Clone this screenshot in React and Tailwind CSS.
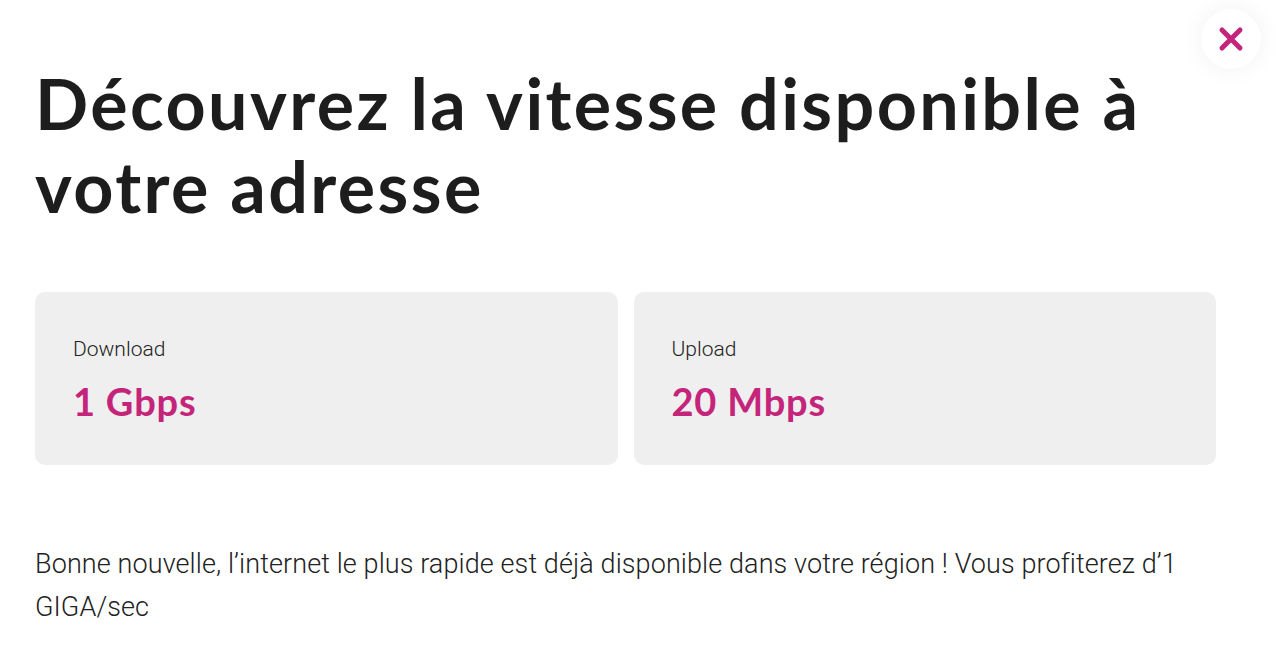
export default function App() {
  return (
    <div className="relative min-h-[654px] w-full bg-white">
      {/* close button */}
      <button className="absolute left-[1201px] top-[9px] flex h-[60px] w-[60px] items-center justify-center rounded-full bg-white shadow-[0_0_24px_rgba(0,0,0,0.06)]">
        <svg width="26" height="26" viewBox="0 0 26 26" fill="none">
          <path d="M4 4L22 22M22 4L4 22" stroke="#c4247a" strokeWidth="5" strokeLinecap="round" />
        </svg>
      </button>

      <div className="w-[1181px] pl-[35px] pt-[62px] box-content">
        <h1 className="text-[70px] leading-[83px] tracking-[2.4px] font-bold text-[#1d1d1d] font-['Lato',sans-serif] pr-[20px]">
          Découvrez la vitesse disponible à votre adresse
        </h1>

        <div className="mt-[64px] grid grid-cols-2 gap-4">
          <SpeedCard label="Download" value="1 Gbps" />
          <SpeedCard label="Upload" value="20 Mbps" />
        </div>

        <p className="mt-[78px] pr-[20px] text-[27px] leading-[43px] tracking-[0.1px] font-light text-[#222] font-['Roboto',sans-serif]">
          Bonne nouvelle, l’internet le plus rapide est déjà disponible dans votre région ! Vous profiterez d’1 GIGA/sec
        </p>
      </div>
    </div>
  )
}

function SpeedCard({ label, value }) {
  return (
    <div className="h-[173px] rounded-[10px] bg-[#efefef] px-[38px] pt-[43px]">
      <div className="text-[21px] leading-[28px] font-light text-[#222] font-['Roboto',sans-serif]">{label}</div>
      <div className="mt-[16px] text-[38px] leading-[44px] tracking-[0.8px] font-bold text-[#c4247a] font-['Lato',sans-serif]">{value}</div>
    </div>
  )
}
